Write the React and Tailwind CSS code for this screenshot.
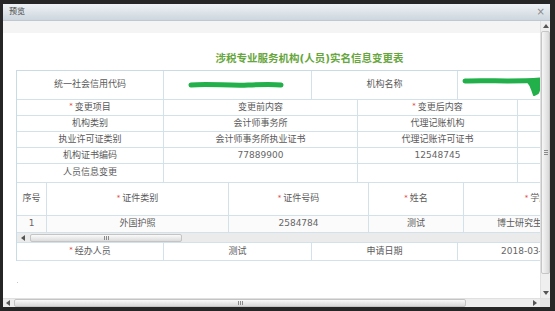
import React from "react";

const FONT = "[font-family:'DejaVu_Sans','Noto_Sans_CJK_SC',sans-serif]";
const CELL = "border-r border-b border-[#d3e1ea] flex items-center justify-center overflow-hidden whitespace-nowrap";

function Star() {
  return <span className="text-[#e0403a] text-[7px] mr-[2px] relative -top-[1px]">*</span>;
}

function Row({ h, cells }) {
  return (
    <div className="flex" style={{ height: h }}>
      {cells.map((c, i) => (
        <div key={i} className={`${CELL} ${c.cls || ""}`} style={{ width: c.w }}>
          {c.c}
        </div>
      ))}
    </div>
  );
}

function Grip({ vertical }) {
  return vertical ? (
    <div className="flex flex-col gap-[1px]">
      <div className="w-[4px] h-[1px] bg-[#8a8a8a]" />
      <div className="w-[4px] h-[1px] bg-[#8a8a8a]" />
      <div className="w-[4px] h-[1px] bg-[#8a8a8a]" />
    </div>
  ) : (
    <div className="flex gap-[1px]">
      <div className="w-[1px] h-[4px] bg-[#8a8a8a]" />
      <div className="w-[1px] h-[4px] bg-[#8a8a8a]" />
      <div className="w-[1px] h-[4px] bg-[#8a8a8a]" />
    </div>
  );
}

function Arrow({ dir }) {
  const pts = {
    up: "0,4 3,0 6,4",
    down: "0,0 3,4 6,0",
    left: "4,0 0,3 4,6",
    right: "0,0 4,3 0,6",
  }[dir];
  const horiz = dir === "left" || dir === "right";
  return (
    <svg width={horiz ? 4 : 6} height={horiz ? 6 : 4} viewBox={horiz ? "0 0 4 6" : "0 0 6 4"}>
      <polygon points={pts} fill="#555" />
    </svg>
  );
}

function Scribble1() {
  return (
    <svg width="96" height="14" viewBox="0 0 96 14">
      <path d="M3 7 C 20 5, 40 8, 60 7 S 85 6, 93 7" stroke="#22b04b" strokeWidth="5" strokeLinecap="round" fill="none" />
    </svg>
  );
}

function Scribble2() {
  return (
    <svg width="80" height="22" viewBox="0 0 80 22">
      <path d="M3 5 C 25 4, 50 6, 78 4" stroke="#22b04b" strokeWidth="5" strokeLinecap="round" fill="none" />
      <path d="M66 6 C 70 10, 70 15, 72 19 L 76 17 C 78 12, 79 8, 78 5 Z" fill="#22b04b" stroke="#22b04b" strokeWidth="2" strokeLinejoin="round" />
    </svg>
  );
}

export default function App() {
  const t1 = [147, 148, 146, 152];
  const t2 = [147, 194, 160, 92];
  const t3 = [30, 182, 140, 95, 146];

  return (
    <div className={`w-[555px] h-[311px] bg-[#262626] pt-[4px] pl-[3px] pr-[5px] pb-[4px] flex ${FONT}`}>
      <div className="flex-1 flex flex-col bg-white overflow-hidden">
        {/* title bar */}
        <div className="h-[17px] flex items-center justify-between pl-[6px] pr-[5px] bg-gradient-to-b from-[#eef2f5] to-[#cdd6de] border-b border-[#bfc8d0]">
          <span className="text-[8px] text-[#444] leading-none">预览</span>
          <span className="text-[10px] text-[#8a8a8a] leading-none">×</span>
        </div>

        {/* body */}
        <div className="flex h-[277px]">
          <div className="w-[537px] overflow-hidden">
            <div className="w-[613px]">
              <div className="h-[12px] bg-[#f5f4f4]" />
              <div className="h-[37px] pt-[18px] text-center text-[10.5px] leading-[14px] font-bold text-[#66a63c]">
                涉税专业服务机构(人员)实名信息变更表
              </div>
              <div className="ml-[13px] w-[594px] border-l border-t border-[#cbdbe6] text-[9px] text-[#5a5a5a]">
                <Row
                  h={29}
                  cells={[
                    { w: t1[0], c: "统一社会信用代码" },
                    { w: t1[1], c: <Scribble1 />, cls: "!justify-start pl-[24px]" },
                    { w: t1[2], c: "机构名称" },
                    { w: t1[3], c: <Scribble2 />, cls: "!justify-start !items-start pl-[4px] pt-[5px]" },
                  ]}
                />
                <Row
                  h={16}
                  cells={[
                    { w: t2[0], c: <><Star />变更项目</> },
                    { w: t2[1], c: "变更前内容" },
                    { w: t2[2], c: <><Star />变更后内容</> },
                    { w: t2[3], c: "" },
                  ]}
                />
                <Row
                  h={16}
                  cells={[
                    { w: t2[0], c: "机构类别" },
                    { w: t2[1], c: "会计师事务所" },
                    { w: t2[2], c: "代理记账机构" },
                    { w: t2[3], c: "" },
                  ]}
                />
                <Row
                  h={16}
                  cells={[
                    { w: t2[0], c: "执业许可证类别" },
                    { w: t2[1], c: "会计师事务所执业证书" },
                    { w: t2[2], c: "代理记账许可证书" },
                    { w: t2[3], c: "" },
                  ]}
                />
                <Row
                  h={16}
                  cells={[
                    { w: t2[0], c: "机构证书编码" },
                    { w: t2[1], c: "77889900", cls: "text-[#666]" },
                    { w: t2[2], c: "12548745", cls: "text-[#666]" },
                    { w: t2[3], c: "" },
                  ]}
                />
                <Row
                  h={19}
                  cells={[
                    { w: t2[0], c: "人员信息变更" },
                    { w: t2[1], c: "" },
                    { w: t2[2], c: "" },
                    { w: t2[3], c: "" },
                  ]}
                />
                <Row
                  h={33}
                  cells={[
                    { w: t3[0], c: "序号" },
                    { w: t3[1], c: <><Star />证件类别</> },
                    { w: t3[2], c: <><Star />证件号码</> },
                    { w: t3[3], c: <><Star />姓名</> },
                    { w: t3[4], c: <><Star />学历</> },
                  ]}
                />
                <Row
                  h={17}
                  cells={[
                    { w: t3[0], c: "1", cls: "bg-[#fbfbfb] text-[#666]" },
                    { w: t3[1], c: "外国护照", cls: "bg-[#fbfbfb]" },
                    { w: t3[2], c: "2584784", cls: "bg-[#fbfbfb] text-[#666]" },
                    { w: t3[3], c: "测试", cls: "bg-[#fbfbfb]" },
                    { w: t3[4], c: "博士研究生", cls: "bg-[#fbfbfb] pr-[34px]" },
                  ]}
                />
                {/* inner horizontal scrollbar */}
                <div className="h-[10px] flex items-center bg-[#ebebeb] border-b border-[#d3e1ea]">
                  <div className="w-[12px] flex items-center justify-center">
                    <Arrow dir="left" />
                  </div>
                  <div className="ml-[1px] w-[152px] h-[8px] rounded-[2px] border border-[#c4c4c4] bg-gradient-to-b from-[#fafafa] to-[#dcdcdc] flex items-center justify-center">
                    <Grip />
                  </div>
                </div>
                <Row
                  h={18}
                  cells={[
                    { w: t1[0], c: <><Star />经办人员</> },
                    { w: t1[1], c: "测试" },
                    { w: t1[2], c: "申请日期" },
                    { w: t1[3], c: "2018-03-15", cls: "text-[#666] !justify-start pl-[43px]" },
                  ]}
                />
              </div>
              <div className="ml-[14px] mt-[21px] w-[1px] h-[1px] bg-[#c8c8c8]" />
            </div>
          </div>

          {/* vertical scrollbar */}
          <div className="w-[10px] flex flex-col bg-[#efefef] border-l border-[#e0e0e0]">
            <div className="h-[10px] flex items-center justify-center">
              <Arrow dir="up" />
            </div>
            <div className="h-[243px] rounded-[2px] border border-[#c6c6c6] bg-gradient-to-r from-[#f7f7f7] to-[#d9d9d9] flex items-center justify-center">
              <Grip vertical />
            </div>
            <div className="flex-1" />
            <div className="h-[10px] flex items-center justify-center">
              <Arrow dir="down" />
            </div>
          </div>
        </div>

        {/* horizontal scrollbar */}
        <div className="h-[9px] flex bg-[#ededed] border-t border-[#e0e0e0]">
          <div className="w-[10px] flex items-center justify-center">
            <Arrow dir="left" />
          </div>
          <div className="ml-[1px] w-[452px] rounded-[2px] border border-[#c4c4c4] bg-gradient-to-b from-[#f9f9f9] to-[#d8d8d8] flex items-center justify-center">
            <Grip />
          </div>
          <div className="flex-1" />
          <div className="w-[10px] flex items-center justify-center">
            <Arrow dir="right" />
          </div>
          <div className="w-[10px] bg-[#e4e4e4]" />
        </div>
      </div>
    </div>
  );
}
